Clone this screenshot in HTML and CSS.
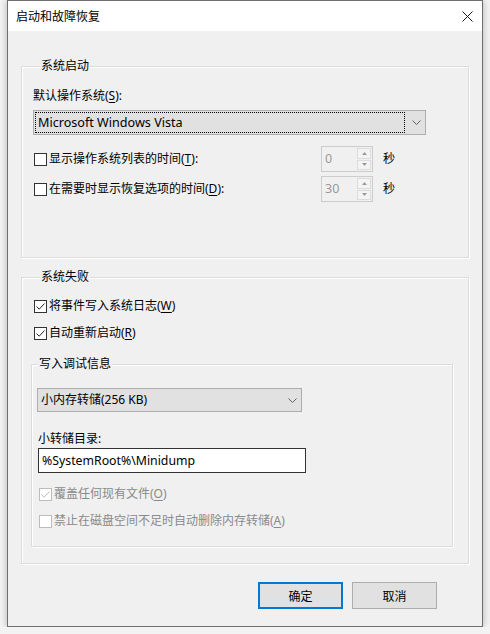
FILE: index.html
```html
<!DOCTYPE html>
<html lang="zh-CN">
<head>
<meta charset="utf-8">
<title>启动和故障恢复</title>
<link rel="stylesheet" href="styles.css">
</head>
<body>
<div class="window">
  <div class="titlebar">
    <span class="title">启动和故障恢复</span>
    <svg class="close" width="11" height="11" viewBox="0 0 11 11"><path d="M0.5 0.5 L10.5 10.5 M10.5 0.5 L0.5 10.5" stroke="#1a1a1a" stroke-width="1" fill="none"/></svg>
  </div>
  <div class="content">
    <section class="group g1">
      <div class="group-title">系统启动</div>
      <div class="field-label">默认操作系统(<u>S</u>):</div>
      <div class="combo combo-os">
        <span class="focus latin">Microsoft Windows Vista</span>
        <svg class="chev" width="9" height="5" viewBox="0 0 9 5"><path d="M0.5 0.5 L4.5 4.5 L8.5 0.5" stroke="#606060" fill="none"/></svg>
      </div>
      <div class="timer-row">
        <div class="check"><span class="box"></span><span>显示操作系统列表的时间(<u>T</u>):</span></div>
        <div class="spin"><span class="spin-val latin">0</span><span class="spin-btns"><span class="sb"><svg width="5" height="3" viewBox="0 0 5 3"><path d="M0 3 L2.5 0 L5 3Z" fill="#9a9a9a"/></svg></span><span class="sb"><svg width="5" height="3" viewBox="0 0 5 3"><path d="M0 0 L2.5 3 L5 0Z" fill="#9a9a9a"/></svg></span></span></div>
        <span class="unit">秒</span>
      </div>
      <div class="timer-row">
        <div class="check"><span class="box"></span><span>在需要时显示恢复选项的时间(<u>D</u>):</span></div>
        <div class="spin"><span class="spin-val latin">30</span><span class="spin-btns"><span class="sb"><svg width="5" height="3" viewBox="0 0 5 3"><path d="M0 3 L2.5 0 L5 3Z" fill="#9a9a9a"/></svg></span><span class="sb"><svg width="5" height="3" viewBox="0 0 5 3"><path d="M0 0 L2.5 3 L5 0Z" fill="#9a9a9a"/></svg></span></span></div>
        <span class="unit">秒</span>
      </div>
    </section>

    <section class="group g2">
      <div class="group-title">系统失败</div>
      <div class="check row-a"><span class="box"><svg width="11" height="11" viewBox="0 0 11 11"><path d="M1.5 5.5 L4.2 8.2 L9.5 2.5" stroke="#222" stroke-width="1" fill="none"/></svg></span><span>将事件写入系统日志(<u>W</u>)</span></div>
      <div class="check row-b"><span class="box"><svg width="11" height="11" viewBox="0 0 11 11"><path d="M1.5 5.5 L4.2 8.2 L9.5 2.5" stroke="#222" stroke-width="1" fill="none"/></svg></span><span>自动重新启动(<u>R</u>)</span></div>

      <section class="group inner">
        <div class="group-title">写入调试信息</div>
        <div class="combo combo-dump">
          <span class="combo-text">小内存转储(<span class="latin">256 KB</span>)</span>
          <svg class="chev" width="9" height="5" viewBox="0 0 9 5"><path d="M0.5 0.5 L4.5 4.5 L8.5 0.5" stroke="#606060" fill="none"/></svg>
        </div>
        <div class="dir-label">小转储目录:</div>
        <div class="textbox latin">%SystemRoot%\Minidump</div>
        <div class="check disabled row-c"><span class="box"><svg width="11" height="11" viewBox="0 0 11 11"><path d="M1.5 5.5 L4.2 8.2 L9.5 2.5" stroke="#bcbcbc" stroke-width="1" fill="none"/></svg></span><span>覆盖任何现有文件(<u>O</u>)</span></div>
        <div class="check disabled row-d"><span class="box"></span><span>禁止在磁盘空间不足时自动删除内存转储(<u>A</u>)</span></div>
      </section>
    </section>

    <div class="buttons">
      <button class="btn default">确定</button>
      <button class="btn">取消</button>
    </div>
  </div>
</div>
</body>
</html>
```

FILE: styles.css
```css
* { box-sizing: border-box; }

body {
  margin: 0;
  background: #f3f3f3;
  font-family: "Noto Sans", "Noto Sans CJK SC", sans-serif;
  font-size: 12px;
  line-height: 16px;
  color: #000;
}

.latin { font-family: "Noto Sans", "Noto Sans CJK SC", sans-serif; }

u { text-decoration-thickness: 1px; text-underline-offset: 2px; }

.window {
  margin-left: 7px;
  width: 476px;
  height: 627px;
  border: 1px solid #6f6f6f;
  background: #f0f0f0;
  box-shadow: 0 0 7px rgba(0, 0, 0, 0.28);
  display: flex;
  flex-direction: column;
}

.titlebar {
  height: 30px;
  background: #fff;
  display: flex;
  align-items: center;
  justify-content: space-between;
  padding: 0 9px 0 8px;
  flex: none;
}

.title { font-family: "Noto Sans CJK SC", sans-serif; }

.close { display: block; }

.content {
  padding: 35px 13px 0;
  display: flex;
  flex-direction: column;
}

.group {
  border: 1px solid #dcdcdc;
  box-shadow: inset 1px 1px 0 #fff, 1px 1px 0 #fff;
}

.group-title {
  width: max-content;
  margin: -9px 0 0 7px;
  padding: 0 1px;
  background: #f0f0f0;
  line-height: 16px;
}

.g1 { padding: 0 0 55px 11px; }

.field-label { margin-top: 14px; }

.combo {
  display: flex;
  align-items: center;
  background: #e1e1e1;
  border: 1px solid #adadad;
}

.combo-os {
  margin-top: 6px;
  width: 393px;
  height: 25px;
  padding: 1px 4px 1px 1px;
  align-items: stretch;
}

.combo-os .focus {
  flex: 1;
  border: 1px dotted #000;
  padding-left: 2px;
  margin-right: 7px;
  display: flex;
  align-items: center;
  font-size: 12.6px;
}

.combo-os .chev { align-self: center; }

.chev { display: block; flex: none; }

.timer-row {
  display: grid;
  grid-template-columns: 288px 52px auto;
  align-items: center;
  margin-top: 11px;
}

.timer-row + .timer-row { margin-top: 4px; }

.check {
  display: flex;
  align-items: center;
  padding-left: 1px;
  height: 16px;
}

.box {
  width: 13px;
  height: 13px;
  border: 1px solid #333;
  background: #fff;
  margin-right: 2px;
  flex: none;
  display: flex;
}

.box svg { display: block; }

.disabled { color: #8a8a8a; }
.disabled .box { border-color: #bcbcbc; }

.spin {
  height: 26px;
  border: 1px solid #cccccc;
  background: #f0f0f0;
  display: flex;
}

.spin-val {
  flex: 1;
  color: #9a9a9a;
  padding-left: 3px;
  display: flex;
  align-items: center;
  font-size: 12.5px;
}

.spin-btns {
  width: 15px;
  display: flex;
  flex-direction: column;
  padding: 1px 1px 1px 0;
  gap: 1px;
}

.sb {
  flex: 1;
  border: 1px solid #dcdcdc;
  background: #f4f4f4;
  display: flex;
  align-items: center;
  justify-content: center;
}

.sb svg { display: block; }

.unit { margin-left: 10px; }

.g2 {
  margin-top: 19px;
  padding: 0 0 16px 11px;
}

.row-a { margin-top: 13px; }
.row-b { margin-top: 11px; }

.inner {
  margin: 23px 15px 0 -2px;
  padding: 0 0 17px 0;
}

.inner .group-title { margin-left: 6px; }

.combo-dump {
  margin: 16px 0 0 5px;
  width: 265px;
  height: 24px;
  padding: 0 4px 0 3px;
}

.combo-text { flex: 1; }

.dir-label { margin: 19px 0 0 6px; }

.textbox {
  margin: 1px 0 0 6px;
  width: 268px;
  height: 25px;
  border: 1px solid #333;
  background: #fff;
  padding-left: 3px;
  display: flex;
  align-items: center;
  font-size: 12.3px;
}

.row-c { margin: 13px 0 0 6px; }
.row-d { margin: 11px 0 0 6px; }

.buttons {
  margin-top: 18px;
  display: flex;
  justify-content: flex-end;
  gap: 9px;
  padding-right: 32px;
}

.btn {
  width: 85px;
  height: 27px;
  background: #e1e1e1;
  border: 1px solid #adadad;
  font-family: "Noto Sans CJK SC", sans-serif;
  font-size: 12px;
  color: #000;
  padding: 0;
}

.btn.default { border: 2px solid #0078d7; }
```
